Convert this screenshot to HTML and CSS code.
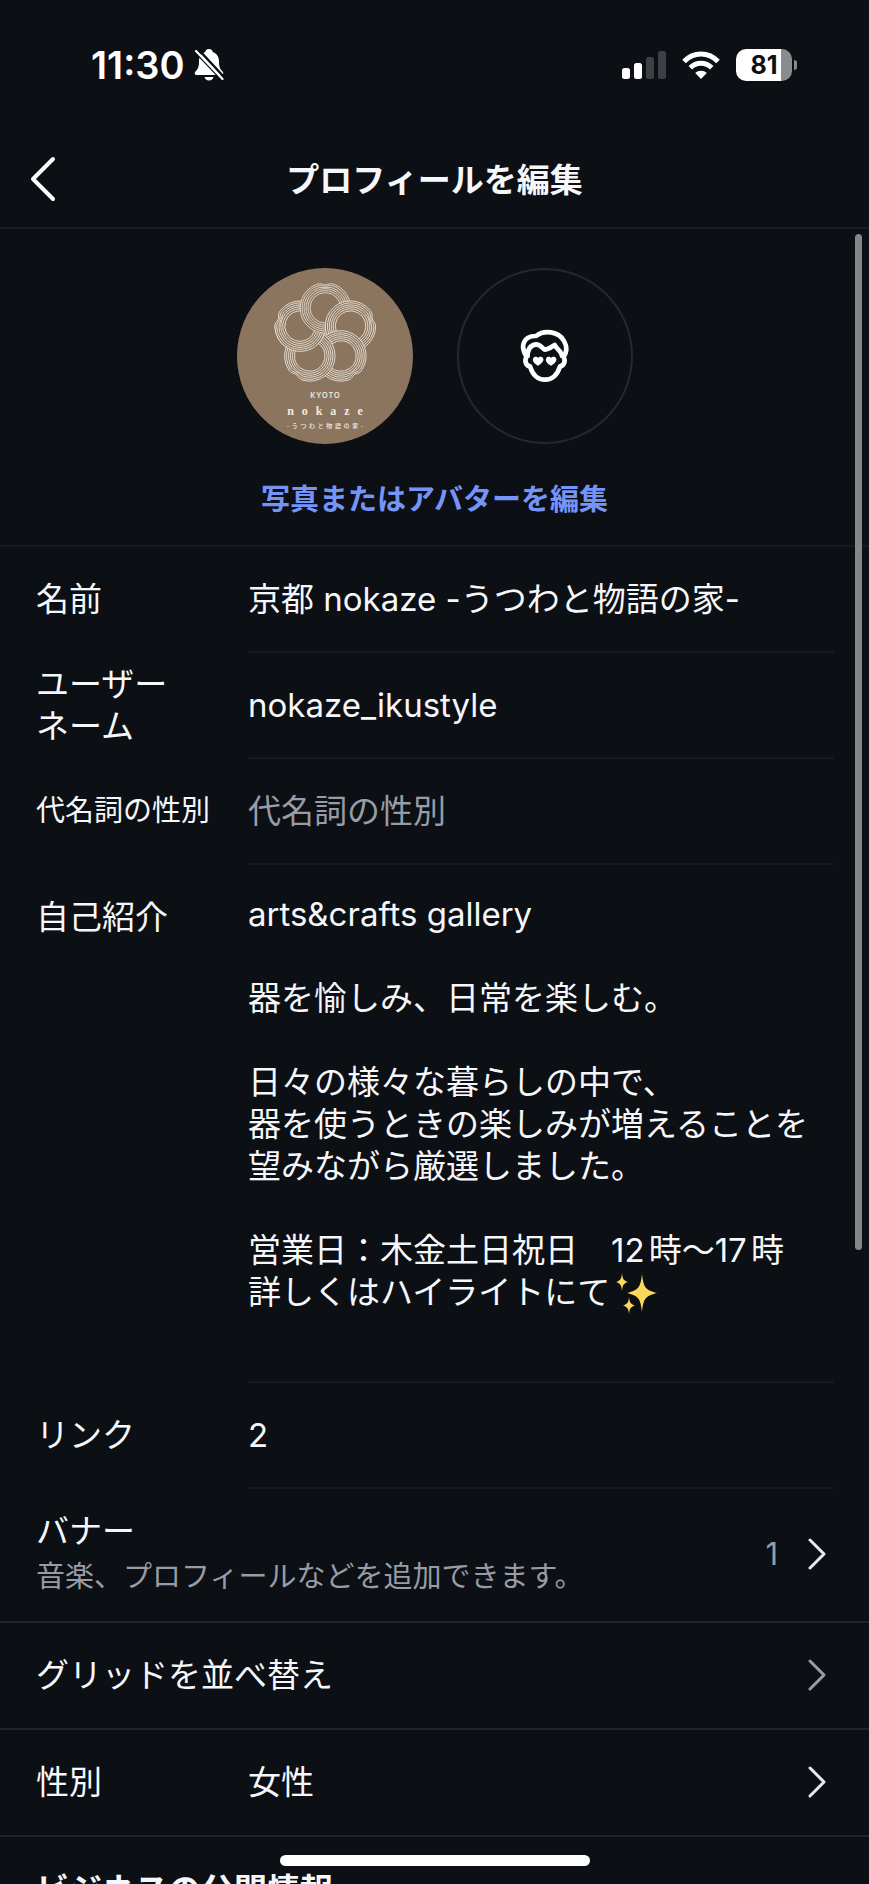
FILE: index.html
```html
<!DOCTYPE html>
<html lang="ja">
<head>
    <meta charset="utf-8" />
    <meta name="viewport" content="width=device-width, initial-scale=1">
    <title>プロフィールを編集</title>
    <link rel="stylesheet" href="styles.css">
</head>
<body>
    <div class="statusbar">
        <div class="status-left">
            <span class="time">11:30</span>
            <svg class="bell" viewBox="0 0 30 34" width="30" height="34">
                <path d="M15 1c-2 0-3.500 1.300-3.800 3C7 5.500 5 9 5 13.500c0 5.500-1.200 7.500-3.500 10C0 25.200.7 27 3 27h24c2.300 0 3-1.800 1.500-3.500-2.300-2.500-3.500-4.500-3.500-10C25 9 23 5.500 18.800 4 18.500 2.300 17 1 15 1z" fill="#fff"/>
                <path d="M10.500 29h9c-.5 2.300-2.200 3.500-4.500 3.500s-4-1.200-4.500-3.500z" fill="#fff"/>
                <path d="M0 2.500L29 33M3 0L30 29" stroke="#0c0f14" stroke-width="2.500"/>
                <path d="M2 3L28.500 31" stroke="#fff" stroke-width="2.200" stroke-linecap="round"/>
            </svg>
        </div>
        <div class="status-right">
            <svg width="44" height="28" viewBox="0 0 44 28">
                <rect x="0" y="17" width="8" height="11" rx="2.500" fill="#fff"/>
                <rect x="12" y="12" width="8" height="16" rx="2.500" fill="#fff"/>
                <rect x="24" y="6" width="8" height="22" rx="2.500" fill="#3d4044"/>
                <rect x="36" y="0" width="8" height="28" rx="2.500" fill="#3d4044"/>
            </svg>
            <svg class="wifi" width="38" height="28" viewBox="0 0 38 28">
                <g fill="none" stroke="#fff" stroke-width="5">
                    <path d="M2 10.500C11.500 .5 26.500 .5 36 10.500"/>
                    <path d="M8.300 16.800c6-6 15.400-6 21.400 0"/>
                </g>
                <path d="M19 28l-5.800-6c3.200-3 8.400-3 11.600 0z" fill="#fff"/>
            </svg>
            <div class="battery"><span>81</span></div>
            <div class="battery-tip"></div>
        </div>
    </div>

    <header class="header">
        <button type="button" class="back" aria-label="戻る">
            <svg width="26" height="46" viewBox="0 0 26 46"><path d="M23 3L3 23l20 20"/></svg>
        </button>
        <h1>プロフィールを編集</h1>
    </header>

    <main class="content">
        <section class="photos">
            <div class="avatars">
                <svg class="logo" viewBox="46 38 530 530" role="img" aria-label="KYOTO nokaze">
                    <defs>
                        <g id="petal">
                            <circle r="75" fill="#8b755f"/>
                            <g fill="none" stroke="#eee7dd" stroke-width="2.400">
                                <circle r="46"/>
                                <circle r="52"/>
                                <circle r="58"/>
                                <path d="M-22-60A64 64 0 1 0 22-60C14-62 7-61 0-61S-14-62-22-60z"/>
                                <path d="M-24-66A70 70 0 1 0 24-66C13-69 7-65 0-65S-13-69-24-66z"/>
                                <path d="M-26-71A76 76 0 1 0 26-71C14-76 8-69 0-69S-14-76-26-71z"/>
                            </g>
                        </g>
                        <!-- lower half of the left petal, it goes over the last one -->
                        <clipPath id="lower"><path d="M312 238L120 175v150h192z"/></clipPath>
                    </defs>
                    <circle cx="311" cy="303" r="265" fill="#8b755f"/>
                    <use href="#petal" transform="translate(236 213) rotate(-72)"/>
                    <use href="#petal" transform="translate(312 158)"/>
                    <use href="#petal" transform="translate(388 213) rotate(72)"/>
                    <use href="#petal" transform="translate(359 303) rotate(144)"/>
                    <use href="#petal" transform="translate(265 303) rotate(216)"/>
                    <g clip-path="url(#lower)">
                        <use href="#petal" transform="translate(236 213) rotate(-72)"/>
                    </g>
                    <text class="logo-city" x="313" y="429">KYOTO</text>
                    <text class="logo-name" x="323" y="480">nokaze</text>
                    <text class="logo-sub" x="315" y="521">-うつわと物語の家-</text>
                </svg>
                <div class="avatar-empty">
                    <svg width="50" height="54" viewBox="0 0 150 162" fill="none" stroke="#fff" stroke-width="14" stroke-linejoin="round">
                        <path d="M20 84C-2 50 12 20 48 21C72 2 116 6 132 36C144 58 138 74 130 84"/>
                        <path d="M22 86C22 60 32 48 48 46C60 46 66 56 74 62C84 62 94 54 104 48C110 62 124 62 128 86"/>
                        <path d="M20 82C12 96 18 110 30 112C38 138 54 152 75 152S112 138 120 112C132 110 138 96 130 82"/>
                        <path d="M54 110C40 102 36 94 40 87C44 81 52 83 54 87C56 83 66 81 69 87C73 94 68 102 54 110zM93 110C79 102 75 94 79 87C83 81 91 83 93 87C95 83 105 81 108 87C112 94 107 102 93 110z" fill="#fff" stroke="none"/>
                    </svg>
                </div>
            </div>
            <a href="#" class="edit-photo">写真またはアバターを編集</a>
        </section>

        <form class="fields">
            <div class="row">
                <label for="name">名前</label>
                <div class="field"><input type="text" id="name" value="京都 nokaze -うつわと物語の家-"></div>
            </div>
            <div class="row">
                <label for="username">ユーザー<br>ネーム</label>
                <div class="field"><input type="text" id="username" value="nokaze_ikustyle"></div>
            </div>
            <div class="row">
                <label for="pronoun" class="small">代名詞の性別</label>
                <div class="field"><input type="text" id="pronoun" placeholder="代名詞の性別"></div>
            </div>
            <div class="row row-bio">
                <label for="bio">自己紹介</label>
                <div class="field">
                    <textarea id="bio" rows="10">arts&amp;crafts gallery

器を愉しみ、日常を楽しむ。

日々の様々な暮らしの中で、
器を使うときの楽しみが増えることを
望みながら厳選しました。

営業日：木金土日祝日　12時〜17時
詳しくはハイライトにて</textarea>
                    <svg class="sparkle" width="42" height="42" viewBox="0 0 42 42" fill="#fbd75b">
                        <path d="M26 1c1.500 13 3 16 15 19-12 3-13.500 6-15 19-1.500-13-3-16-15-19 12-3 13.500-6 15-19z"/>
                        <path d="M6 0c.6 6 1.500 7.500 6 9-4.500 1.500-5.400 3-6 9-.6-6-1.500-7.500-6-9 4.500-1.500 5.400-3 6-9z"/>
                        <path d="M13 24c.6 5.500 1.500 7 6 8.500-4.500 1.500-5.400 3-6 8.500-.6-5.500-1.500-7-6-8.500 4.500-1.500 5.400-3 6-8.500z"/>
                    </svg>
                </div>
            </div>
            <div class="row">
                <label for="links">リンク</label>
                <div class="field"><button type="button" id="links">2</button></div>
            </div>
        </form>

        <nav class="menu">
            <a href="#" class="item item-banner">
                <span class="text">バナー<small>音楽、プロフィールなどを追加できます。</small></span>
                <span class="count">1</span>
                <svg class="arrow" viewBox="0 0 18 32"><path d="M2 2l14 14L2 30"/></svg>
            </a>
            <a href="#" class="item">
                <span class="text">グリッドを並べ替え</span>
                <svg class="arrow gray" viewBox="0 0 18 32"><path d="M2 2l14 14L2 30"/></svg>
            </a>
            <a href="#" class="item">
                <span class="name">性別</span>
                <span class="text">女性</span>
                <svg class="arrow" viewBox="0 0 18 32"><path d="M2 2l14 14L2 30"/></svg>
            </a>
        </nav>

        <h2>ビジネスの公開情報</h2>
    </main>

    <div class="scrollbar"></div>
    <div class="home-indicator"></div>
</body>
</html>
```
FILE: styles.css
```css
* { margin: 0; border: 0; padding: 0; box-sizing: border-box; }

body {
    background: #0c0f14;
    color: #f5f7fa;
    font-family: Inter, "Noto Sans CJK JP", sans-serif;
    font-size: 33px;
    line-height: 42px;
    text-autospace: normal;
    height: 100vh;
    overflow: hidden;
    position: relative;
}

input, textarea, button {
    background: none;
    color: inherit;
    font: inherit;
    outline: none;
}

a { color: inherit; text-decoration: none; }

/* status bar */
.statusbar {
    display: flex;
    justify-content: space-between;
    align-items: center;
    height: 130px;
    padding: 0 72px 0 91px;
    color: #fff;
}

.status-left, .status-right {
    display: flex;
    align-items: center;
}

.time {
    font-size: 38px;
    font-weight: 600;
}

.bell { margin-left: 9px; }
.wifi { margin: 0 16px; }

.battery {
    width: 56px;
    height: 32px;
    border-radius: 10px;
    background: linear-gradient(to right, #fff 81%, #8a8b8d 81%);
    color: #0c0f14;
    font-size: 25px;
    font-weight: 700;
    line-height: 32px;
    text-align: center;
}

.battery-tip {
    width: 3px;
    height: 10px;
    margin-left: 2px;
    border-radius: 0 3px 3px 0;
    background: #8a8b8d;
}

/* header */
.header {
    display: grid;
    grid-template-columns: 86px 1fr 86px;
    align-items: center;
    height: 99px;
    border-bottom: 2px solid #1a1d22;
}

.header h1 {
    padding-top: 2px;
    font-size: 33px;
    font-weight: 700;
    text-align: center;
}

.back {
    height: 97px;
    padding-left: 30px;
    text-align: left;
    cursor: pointer;
}

.back svg { display: block; }

.back path {
    fill: none;
    stroke: #fff;
    stroke-width: 4;
    stroke-linecap: round;
    stroke-linejoin: round;
}

/* photo and avatar */
.photos {
    padding: 39px 0 24px;
    border-bottom: 2px solid #16191e;
    text-align: center;
}

.avatars {
    display: flex;
    justify-content: center;
    gap: 44px;
    margin-bottom: 35px;
}

.logo {
    width: 176px;
    height: 176px;
}

.logo text {
    fill: #f1ebe3;
    text-anchor: middle;
}

.logo-city {
    font-family: Lato, sans-serif;
    font-size: 21px;
    font-weight: 700;
    letter-spacing: 4px;
}

.logo-name {
    font-family: "Liberation Serif", serif;
    font-size: 36px;
    font-weight: 700;
    letter-spacing: 24px;
}

.logo-sub {
    font-family: "Noto Sans CJK JP", sans-serif;
    font-size: 18px;
    font-weight: 500;
    letter-spacing: 8px;
}

.avatar-empty {
    display: flex;
    justify-content: center;
    align-items: center;
    width: 176px;
    height: 176px;
    border: 2px solid #25282c;
    border-radius: 50%;
}

.edit-photo {
    display: block;
    color: #7594f8;
    font-size: 29px;
    font-weight: 700;
}

/* fields */
.row {
    display: grid;
    grid-template-columns: 212px 1fr;
    align-items: center;
    min-height: 106px;
    padding: 0 35px 0 36px;
}

.row label { padding-bottom: 2px; }
.row .small { font-size: 29px; }

.field {
    align-self: stretch;
    display: flex;
    position: relative;
    border-bottom: 2px solid #16191e;
}

.field input, .field textarea, .field button {
    width: 100%;
    text-align: left;
}

.field input::placeholder { color: #989ca6; opacity: 1; }

.row-bio {
    align-items: start;
    height: 518px;
}

.row-bio label { padding-top: 31px; }

.field textarea {
    padding-top: 28px;
    resize: none;
    overflow: hidden;
    line-height: 42px;
}

.sparkle {
    position: absolute;
    left: 368px;
    top: 408px;
}

/* menu */
.item {
    display: flex;
    align-items: center;
    height: 107px;
    padding: 0 43px 2px 36px;
    border-bottom: 2px solid #202328;
}

.item-banner { height: 134px; }
.item .name { width: 212px; }
.item .text { flex: 1; }

.item small {
    display: block;
    margin-top: 4px;
    color: #989ca6;
    font-size: 29px;
}

.count {
    margin-right: 30px;
    color: #989ca6;
    font-size: 31px;
}

.arrow {
    width: 18px;
    height: 32px;
    fill: none;
    stroke: #e6e9ed;
    stroke-width: 3;
    stroke-linecap: round;
    stroke-linejoin: round;
}

.arrow.gray { stroke: #989ca6; }

h2 {
    padding: 32px 36px;
    font-size: 33px;
    font-weight: 700;
}

/* over the page */
.scrollbar {
    position: absolute;
    top: 234px;
    right: 7px;
    width: 7px;
    height: 1016px;
    border-radius: 4px;
    background: #858689;
}

.home-indicator {
    position: absolute;
    bottom: 18px;
    left: 50%;
    width: 310px;
    height: 11px;
    margin-left: -155px;
    border-radius: 6px;
    background: #fff;
}
```
